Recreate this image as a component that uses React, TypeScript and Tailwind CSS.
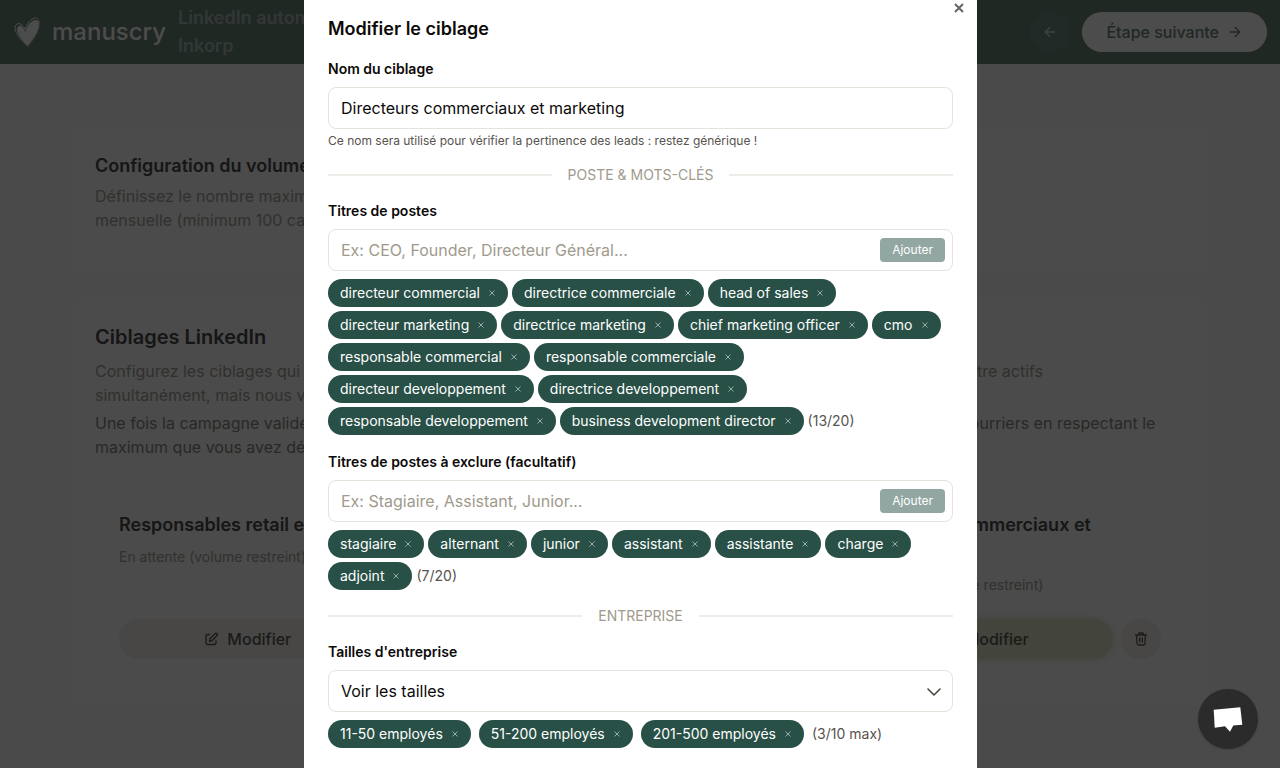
import { ArrowLeft, ArrowRight } from "lucide-react";
import type { ReactNode } from "react";

const titles = [
  "directeur commercial",
  "directrice commerciale",
  "head of sales",
  "directeur marketing",
  "directrice marketing",
  "chief marketing officer",
  "cmo",
  "responsable commercial",
  "responsable commerciale",
  "directeur developpement",
  "directrice developpement",
  "responsable developpement",
  "business development director",
];

const excluded = ["stagiaire", "alternant", "junior", "assistant", "assistante", "charge", "adjoint"];

const sizes = ["11-50 employés", "51-200 employés", "201-500 employés"];

function HeartLogo() {
  return (
    <svg viewBox="0 0 26 30" className="h-[30px] w-[26px] shrink-0 text-white" aria-hidden="true">
      <path
        d="M13.5 29C8 24 1.5 17.5 1 11.5C.8 7.5 4 5.500 7 7.200C9 8.400 10.300 10.500 11 12.500C12.500 7 16.500 1.500 21.500 1C25 1 25.500 5 24.800 9C23.500 16.500 18.500 23.500 13.500 29Z"
        fill="none"
        stroke="currentColor"
        strokeWidth="1"
      />
      <path
        d="M13.500 28.500C9.500 24.500 3.500 18.500 3 12.500C3 9.200 5.200 8 7.500 9.200C9.500 10.500 10.800 13 11.200 15.500C12.500 9 16.500 4 21 3C24.800 2.600 25 6 24.500 9.500C23.200 16 18.500 22.500 13.500 28.500Z"
        fill="currentColor"
      />
    </svg>
  );
}

function EditIcon() {
  return (
    <svg viewBox="0 0 16 16" className="size-4" fill="none" stroke="currentColor" strokeWidth="1.4" strokeLinecap="round" strokeLinejoin="round" aria-hidden="true">
      <path d="M6.500 3.500H4.500A1.500 1.500 0 0 0 3 5v7A1.500 1.500 0 0 0 4.500 13.500h7a1.500 1.500 0 0 0 1.500-1.500V10" />
      <path d="M6.500 10.200l.5-2.400 5.200-5.200a1.100 1.100 0 0 1 1.600 0l.3.3a1.100 1.100 0 0 1 0 1.600l-5.200 5.200z" />
    </svg>
  );
}

function TrashIcon() {
  return (
    <svg viewBox="0 0 16 16" className="size-4" fill="none" stroke="currentColor" strokeWidth="1.3" strokeLinecap="round" strokeLinejoin="round" aria-hidden="true">
      <path d="M2.500 4h11M5.500 4l.5-2h4l.5 2M3.500 4l.6 8.800A1.300 1.300 0 0 0 5.400 14h5.200a1.300 1.300 0 0 0 1.300-1.200L12.500 4M6.700 7v4M9.300 7v4" />
    </svg>
  );
}

function TargetCard({ title, primary = false }: { title: string; primary?: boolean }) {
  return (
    <article className="flex min-h-49 flex-col rounded-lg bg-[#fafafa] p-6">
      <h3 className="text-lg font-semibold text-[#4a4a4a]">{title}</h3>
      <p className="mt-2 text-sm text-[#a5a297]">En attente (volume restreint)</p>
      <div className="mt-auto flex gap-2">
        <button
          className={
            primary
              ? "flex h-10 flex-1 items-center justify-center gap-2 rounded-full bg-[#dfe3c6] font-medium text-[#5a5a55] shadow-[0_0_4px_2px_#eaecdc]"
              : "flex h-10 flex-1 items-center justify-center gap-2 rounded-full bg-[#f0edea] font-medium text-[#5a5a55]"
          }
        >
          <EditIcon />
          Modifier
        </button>
        <button aria-label={`Supprimer ${title}`} className="flex size-10 items-center justify-center rounded-full bg-[#f0edeb] text-[#5a5a55]">
          <TrashIcon />
        </button>
      </div>
    </article>
  );
}

function Chip({ children }: { children: string }) {
  return (
    <li className="flex h-7 items-center gap-2 rounded-full bg-[#285046] px-3 text-sm text-white">
      {children}
      <button aria-label={`Retirer ${children}`} className="text-[#a3b5b0]">
        <svg viewBox="0 0 8 8" className="size-2" fill="none" stroke="currentColor" strokeWidth="0.9" aria-hidden="true">
          <path d="M1.500 1.500l5 5M6.500 1.500l-5 5" />
        </svg>
      </button>
    </li>
  );
}

function Divider({ children }: { children: ReactNode }) {
  return (
    <div className="mt-4 flex items-center gap-4 text-sm text-[#a09a8c]">
      <span className="h-0.5 flex-1 bg-[#eeece7]" />
      {children}
      <span className="h-0.5 flex-1 bg-[#eeece7]" />
    </div>
  );
}

function ChipField({ id, label, placeholder, items, count }: { id: string; label: string; placeholder: string; items: string[]; count: string }) {
  return (
    <div>
      <label htmlFor={id} className="block text-sm font-semibold">
        {label}
      </label>
      <div className="mt-2 flex h-[42px] items-center rounded-lg border border-[#e5e3dc] pr-[7px]">
        <input id={id} placeholder={placeholder} className="min-w-0 flex-1 bg-transparent px-3 outline-none placeholder:text-[#a09a8c]" />
        <button className="h-6 rounded-sm bg-[#93a7a2] px-3 text-xs text-white">Ajouter</button>
      </div>
      <ul className="mt-2 flex flex-wrap items-center gap-1">
        {items.map((item) => (
          <Chip key={item}>{item}</Chip>
        ))}
        <li className="text-sm text-[#57534e]">{count}</li>
      </ul>
    </div>
  );
}

export default function App() {
  return (
    <div className="relative h-screen overflow-hidden bg-[#f8f8f8] font-['Inter',sans-serif] text-base">
      <header className="flex h-16 items-center justify-between bg-[#6b857b] pr-[13px] pl-[14px]">
        <div className="flex items-center">
          <HeartLogo />
          <span className="ml-3 text-2xl font-medium text-white">manuscry</span>
          <h1 className="ml-3 w-52 text-lg leading-7 font-semibold text-[#a9bab4]">LinkedIn automatisée Inkorp</h1>
        </div>
        <div className="flex items-center gap-3">
          <button aria-label="Étape précédente" className="flex size-10 items-center justify-center rounded-full bg-[#748c83] text-[#d0dad6]">
            <ArrowLeft className="size-4" />
          </button>
          <button className="flex h-10 items-center gap-2 rounded-full bg-white px-6 font-medium text-[#6b857b]">
            Étape suivante
            <ArrowRight className="size-4" />
          </button>
        </div>
      </header>

      <main className="flex flex-col gap-6 px-[71px] pt-16">
        <section className="min-h-[147px] rounded-xl bg-[#fcfcfc] p-6">
          <h2 className="text-lg font-semibold text-[#4a4a4a]">Configuration du volume</h2>
          <p className="mt-1 text-[#a5a297]">
            Définissez le nombre maximum de cartes par campagne
            <br />
            mensuelle (minimum 100 cartes)
          </p>
        </section>
        <section className="rounded-xl bg-[#fcfcfc] p-6">
          <h2 className="text-xl font-semibold text-[#4a4a4a]">Ciblages LinkedIn</h2>
          <p className="mt-2 text-[#a5a297]">
            Configurez les ciblages qui seront utilisés pour trouver vos futurs prospects. Plusieurs ciblages peuvent également être actifs
            <br />
            simultanément, mais nous vous conseillons de rester précis.
          </p>
          <p className="mt-1 text-[#8c857b]">
            Une fois la campagne validée, nous trouverons chaque mois de nouveaux prospects et leur enverrons ensuite vos courriers en respectant le
            <br />
            maximum que vous avez défini.
          </p>
          <div className="mt-7 grid grid-cols-3 gap-4">
            <TargetCard title="Responsables retail et commerce" />
            <TargetCard title="Responsables communication" />
            <TargetCard title="Directeurs commerciaux et marketing" primary />
          </div>
        </section>
      </main>

      <div className="fixed inset-0 flex justify-center overflow-hidden bg-black/70 pl-px">
        <div role="dialog" aria-modal="true" aria-labelledby="dialog-title" className="relative h-full w-full max-w-[673px] bg-white px-6 pt-[15px] text-[#0c0a09]">
          <button aria-label="Fermer" className="absolute top-0.5 right-3 flex size-3 items-center justify-center text-[#666]">
            <svg viewBox="0 0 10 10" className="size-2.5" fill="none" stroke="currentColor" strokeWidth="2" aria-hidden="true">
              <path d="M1 1l8 8M9 1l-8 8" />
            </svg>
          </button>
          <h2 id="dialog-title" className="text-lg font-semibold">
            Modifier le ciblage
          </h2>
          <label htmlFor="name" className="mt-4 block text-sm font-semibold">
            Nom du ciblage
          </label>
          <input id="name" defaultValue="Directeurs commerciaux et marketing" className="mt-2 block h-[42px] w-full rounded-lg border border-[#e5e3dc] px-3 outline-none" />
          <p className="mt-1 text-xs text-[#57534e]">Ce nom sera utilisé pour vérifier la pertinence des leads : restez générique !</p>
          <Divider>POSTE &amp; MOTS-CLÉS</Divider>
          <div className="mt-4 flex flex-col gap-[17px]">
            <ChipField id="titles" label="Titres de postes" placeholder="Ex: CEO, Founder, Directeur Général..." items={titles} count="(13/20)" />
            <ChipField id="excluded" label="Titres de postes à exclure (facultatif)" placeholder="Ex: Stagiaire, Assistant, Junior..." items={excluded} count="(7/20)" />
          </div>
          <Divider>ENTREPRISE</Divider>
          <label htmlFor="sizes" className="mt-4 block text-sm font-semibold">
            Tailles d'entreprise
          </label>
          <div className="relative mt-2">
            <select id="sizes" className="block h-[42px] w-full appearance-none rounded-lg border border-[#e5e3dc] bg-white px-3 outline-none">
              <option>Voir les tailles</option>
            </select>
            <svg viewBox="0 0 14 8" className="pointer-events-none absolute top-[18px] right-3 h-2 w-3.5" fill="none" stroke="#44403c" strokeWidth="1.5" strokeLinecap="round" strokeLinejoin="round" aria-hidden="true">
              <path d="M1 1l6 6 6-6" />
            </svg>
          </div>
          <ul className="mt-2 flex flex-wrap items-center gap-2">
            {sizes.map((size) => (
              <Chip key={size}>{size}</Chip>
            ))}
            <li className="text-sm text-[#57534e]">(3/10 max)</li>
          </ul>
        </div>
      </div>

      <button aria-label="Ouvrir la messagerie" className="fixed right-[22px] bottom-[19px] flex size-15 items-center justify-center rounded-full bg-[#2b2b2b] text-white shadow-sm">
        <svg viewBox="0 0 30 26" className="h-[26px] w-[30px]" fill="currentColor" aria-hidden="true">
          <path d="M.7 3.7L27.300 1.300L29.300 18.700L20.300 19.500L17 25.700L12 20.300L1.700 21.700Z" />
        </svg>
      </button>
    </div>
  );
}
